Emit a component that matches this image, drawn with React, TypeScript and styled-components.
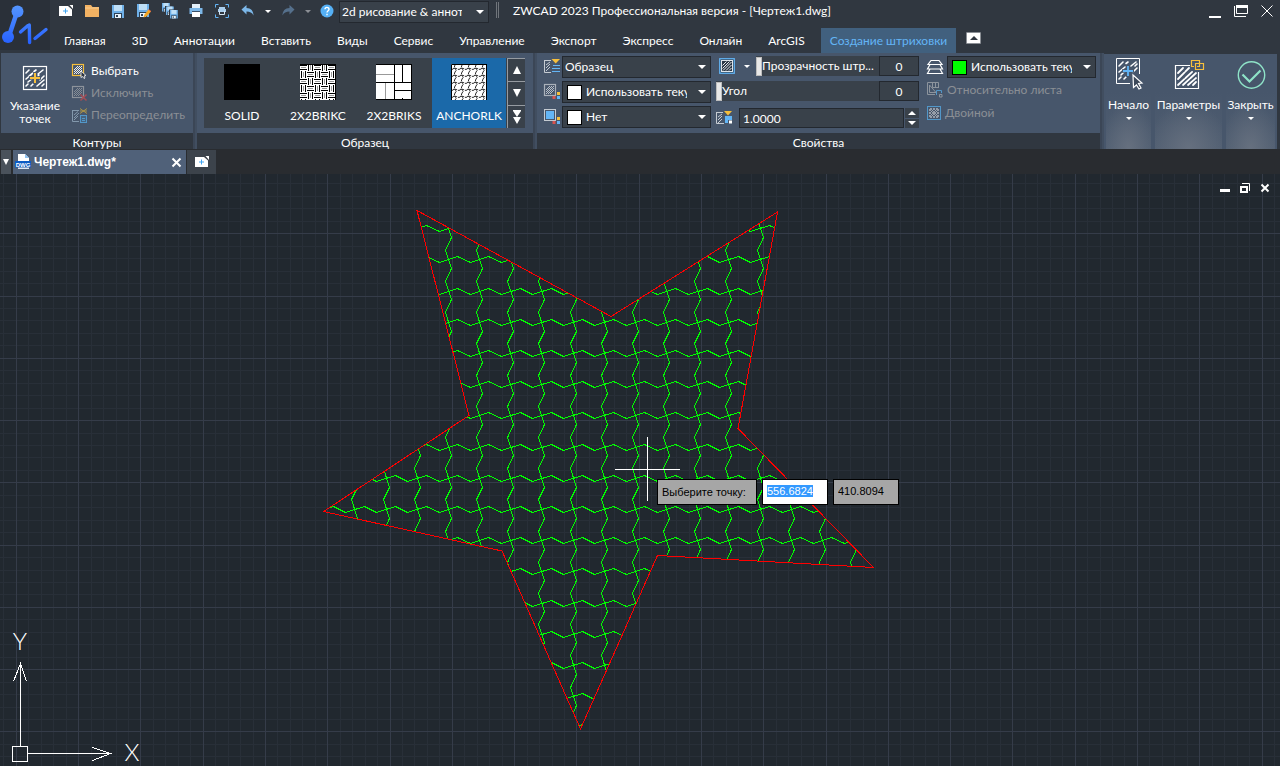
import React, { useEffect, useRef } from "react";
import styled, { createGlobalStyle, css } from "styled-components";

const c = {
  bar: "#303740",
  logo: "#2a3039",
  panel: "#47566b",
  divider: "#3b4656",
  field: "#39414a",
  edge: "#23282f",
  text: "#ffffff",
  muted: "#8b8f95",
  blue: "#63b5f6",
  yellow: "#f6bf3c",
  strip: "#292c30",
  canvas: "#21282f",
  minor: "#282f38",
  major: "#353c49",
};

const Global = createGlobalStyle`
  *, *::before, *::after { box-sizing: border-box; }
  body { margin: 0; background: ${c.canvas}; }
  body, button, input, select { font-family: Lato, "Open Sans", sans-serif; font-size: 12px; line-height: 16px; color: ${c.text}; }
  button, input, select { margin: 0; padding: 0; border: 0; background: none; border-radius: 0; outline: none; }
  svg { display: block; flex: none; overflow: visible; }
`;

/* ---------- window frame ---------- */

const Window = styled.div`
  display: flex;
  flex-direction: column;
  min-height: 100vh;
`;
const Header = styled.header`
  display: flex;
  background: ${c.bar};
  height: 53px;
`;
const Logo = styled.div`
  width: 50px;
  height: 50px;
  background: ${c.logo};
`;
const HeaderRows = styled.div`
  flex: 1;
  min-width: 0;
`;
const TitleBar = styled.div`
  display: flex;
  height: 24px;
  padding-left: 3px;
`;
const QuickButton = styled.button<{ $w?: number }>`
  display: grid;
  place-items: center;
  width: ${(p) => p.$w ?? 26}px;
  height: 22px;
`;
const Workspace = styled.div`
  margin-top: 1px;
`;
const Grip = styled.span`
  width: 3px;
  height: 16px;
  margin: 2px 14px 0 7px;
  border: solid #70757b;
  border-width: 0 1px;
`;
const Title = styled.h1`
  flex: 1;
  margin: 0;
  font-size: 12px;
  font-weight: 400;
  line-height: 22px;
  white-space: nowrap;
`;
const MenuTabs = styled.nav`
  display: flex;
  align-items: center;
  height: 29px;
  padding: 4px 0 0 1px;
`;
const MenuTab = styled.button<{ $active?: boolean }>`
  height: 25px;
  padding: 0 13px;
  white-space: nowrap;
  ${(p) =>
    p.$active &&
    css`
      margin-left: 3px;
      padding: 0 9px;
      background: #41607e;
      color: ${c.blue};
    `}
`;
const Collapse = styled.button`
  display: grid;
  place-items: center;
  width: 15px;
  height: 12px;
  margin: 0 0 6px 10px;
  background: #fff;
  border: 1px solid #8b8f95;
  border-radius: 1px;
`;

/* ---------- ribbon ---------- */

const Ribbon = styled.section`
  display: flex;
  height: 96px;
  padding: 0 3px 0 1px;
  background: ${c.bar};
`;
const Group = styled.div<{ $grow?: boolean }>`
  display: flex;
  flex-direction: column;
  flex: ${(p) => (p.$grow ? "1 0 auto" : "none")};
`;
const GroupBody = styled.div`
  display: flex;
  height: 80px;
  background: ${c.panel};
`;
const GroupTitle = styled.div`
  height: 16px;
  line-height: 20px;
  text-align: center;
`;
const Divider = styled.div`
  width: 4px;
  background: #414e60;
  border-left: 2px solid ${c.divider};
`;
const PickPoints = styled.button`
  display: flex;
  flex-direction: column;
  align-items: center;
  gap: 8px;
  width: 68px;
  padding-top: 13px;
  line-height: 13px;
`;
const ToolList = styled.div`
  display: flex;
  flex-direction: column;
  padding: 7px 8px 0 3px;
`;
const Tool = styled.button`
  display: flex;
  align-items: center;
  gap: 4px;
  height: 22px;
  white-space: nowrap;
  &:disabled {
    color: ${c.muted};
  }
`;
const Gallery = styled.div`
  display: flex;
  height: 70px;
  margin: 5px 8px 0 7px;
  background: ${c.field};
`;
const Swatch = styled.button<{ $active?: boolean }>`
  display: flex;
  flex-direction: column;
  align-items: center;
  gap: 8px;
  width: 76px;
  padding-top: 6px;
  background: ${(p) => (p.$active ? "#1b69a9" : "transparent")};
  &:nth-child(4) {
    width: 74px;
  }
`;
const Scroller = styled.div`
  display: flex;
  flex-direction: column;
  width: 18px;
  margin-left: 1px;
  border-left: 1px solid #969ba1;
`;
const ScrollButton = styled.button`
  display: grid;
  place-items: center;
  flex: 1;
  border-top: 1px solid #969ba1;
`;
const Column = styled.div<{ $gap: number; $left: number; $w: number }>`
  display: flex;
  flex-direction: column;
  gap: ${(p) => p.$gap}px;
  width: ${(p) => p.$w}px;
  padding: 3px 0 0 ${(p) => p.$left}px;
`;
const Row = styled.div<{ $h: number }>`
  display: flex;
  align-items: center;
  height: ${(p) => p.$h}px;
`;
const RowIcon = styled.span<{ $w: number }>`
  display: flex;
  flex: none;
  width: ${(p) => p.$w}px;
`;
const Combo = styled.label<{ $w: number; $chip: boolean }>`
  display: flex;
  align-items: center;
  width: ${(p) => p.$w}px;
  height: 22px;
  padding: 0 4px 0 ${(p) => (p.$chip ? 4 : 2)}px;
  background: ${c.field};
  border: 1px solid ${c.edge};
  select {
    flex: 1;
    min-width: 0;
    appearance: none;
    overflow: hidden;
    text-overflow: clip;
  }
  option {
    color: #000;
  }
  svg {
    margin-left: ${(p) => (p.$chip ? 11 : 14)}px;
  }
`;
const Chip = styled.span<{ $color: string }>`
  width: 15px;
  height: 15px;
  margin-right: 4px;
  background: ${(p) => p.$color};
  border: 1px solid #000;
`;
const SliderBox = styled.div`
  display: grid;
  flex: 1;
  min-width: 0;
  grid-template-columns: minmax(0, 1fr);
  height: 20px;
  background: ${c.field};
  label,
  input {
    grid-area: 1 / 1;
  }
  label {
    padding-left: 6px;
    line-height: 20px;
    pointer-events: none;
    white-space: nowrap;
    z-index: 1;
  }
  input {
    appearance: none;
    width: 100%;
    height: 20px;
  }
  input::-webkit-slider-thumb {
    appearance: none;
    width: 6px;
    height: 19px;
    background: #e8e8e8;
    border: 1px solid #bdbdbd;
  }
`;
const NumberBox = styled.input`
  flex: none;
  width: 40px;
  height: 20px;
  background: ${c.field};
  border: 1px solid ${c.edge};
  text-align: center;
`;
const ScaleBox = styled.input`
  flex: 1;
  min-width: 0;
  height: 20px;
  padding-left: 3px;
  background: ${c.field};
  border: 1px solid ${c.edge};
`;
const Spinner = styled.div`
  display: grid;
  grid-template-rows: 1fr 1fr;
  gap: 1px;
  width: 14px;
  height: 20px;
  margin-left: 1px;
  button {
    display: grid;
    place-items: center;
    background: ${c.field};
  }
`;
const Actions = styled.div`
  display: flex;
  gap: 4px;
  margin-top: 1px;
  padding: 0 2px;
  background: ${c.panel};
`;
const Action = styled.button<{ $w: number }>`
  display: flex;
  flex-direction: column;
  align-items: center;
  width: ${(p) => p.$w}px;
  padding-top: 4px;
  background: radial-gradient(ellipse 60% 50% at 50% 100%, #66707f, transparent), linear-gradient(${c.panel} 40%, #505e71);
  span {
    margin: 7px 0 4px;
    line-height: 16px;
  }
`;

/* ---------- document tabs ---------- */

const DocTabs = styled.div`
  display: flex;
  gap: 1px;
  height: 25px;
  padding: 1px 0 0 1px;
  background: ${c.strip};
`;
const DocList = styled.button`
  display: grid;
  place-items: center;
  width: 10px;
  margin-right: 1px;
  background: #4a525b;
`;
const DocTab = styled.div`
  display: flex;
  align-items: center;
  width: 173px;
  padding: 0 5px 0 2px;
  background: #506179;
`;
const DocName = styled.button`
  flex: 1;
  padding-left: 3px;
  font-family: "Liberation Sans", Arial, sans-serif;
  font-weight: 700;
  text-align: left;
`;
const NewDoc = styled.button`
  display: grid;
  place-items: center;
  width: 29px;
  background: #3c434b;
`;

/* ---------- drawing area ---------- */

const Canvas = styled.main`
  position: relative;
  flex: 1;
  min-height: 592px;
  overflow: hidden;
  background: ${c.canvas};
`;
const Sheet = styled.svg`
  position: absolute;
  inset: 0;
  width: 100%;
  height: 100%;
`;
const Ucs = styled.svg`
  position: absolute;
  left: 0;
  bottom: 0;
`;
const ViewButtons = styled.div`
  position: absolute;
  top: 4px;
  right: 5px;
  display: flex;
  button {
    display: grid;
    place-items: center;
    width: 20px;
    height: 20px;
  }
`;
const Prompt = styled.form`
  position: absolute;
  left: 657px;
  top: 305px;
  display: flex;
  gap: 5px;
`;
const PromptText = styled.label`
  width: 100px;
  height: 26px;
  padding-left: 4px;
  background: #a6a6a6;
  border: 1px solid #000;
  color: #000;
  font: 11px/25px "Liberation Sans", Arial, sans-serif;
`;
const Coordinate = styled.input<{ $active?: boolean }>`
  width: 66px;
  height: 26px;
  padding: 0 0 3px 4px;
  background: ${(p) => (p.$active ? "#fff" : "#a6a6a6")};
  border: 1px solid #000;
  color: #000;
  font: 11px/14px "Liberation Sans", Arial, sans-serif;
  &::selection {
    background: #3399ff;
    color: #fff;
  }
`;

/* ---------- icons ---------- */

const Caret = ({ w = 8, up = false, color = "#fff" }: { w?: number; up?: boolean; color?: string }) => (
  <svg width={w} height={w / 2} viewBox="0 0 8 4">
    <path d={up ? "M0 4L4 0L8 4Z" : "M0 0H8L4 4Z"} fill={color} />
  </svg>
);

const LogoIcon = () => (
  <svg width="50" height="50" viewBox="0 0 50 50">
    <defs>
      <linearGradient id="logo" x1="0" y1="0" x2="0" y2="50" gradientUnits="userSpaceOnUse">
        <stop offset="0" stopColor="#5b9dff" />
        <stop offset="1" stopColor="#1f58ff" />
      </linearGradient>
    </defs>
    <g fill="url(#logo)">
      <circle cx="17.5" cy="11.500" r="6" />
      <circle cx="8" cy="37" r="6" />
    </g>
    <g fill="none" stroke="url(#logo)" strokeLinecap="round">
      <path d="M17 12L9 36" strokeWidth="4.500" />
      <path d="M20.500 32L28 25.500M29.300 25L29.600 42.500M35 38.500L46 29.500" strokeWidth="3.400" />
    </g>
  </svg>
);

const NewFileIcon = () => (
  <svg width="14" height="12" viewBox="0 0 14 12">
    <path d="M0 1H9L13 4.500V11H0Z" fill="#fff" />
    <path d="M10.500 0H14V4Z" fill="#fff" />
    <path d="M4 6H9M6.500 3.500V8.500" stroke="#3fa4f0" />
  </svg>
);
const FolderIcon = () => (
  <svg width="14" height="12" viewBox="0 0 14 12">
    <path d="M0 0H6L7.500 2H14V12H0Z" fill="#f2b263" />
    <path d="M0 3H14" stroke="#f8cd92" />
  </svg>
);
const Disk = ({ x = 0, y = 0, s = 1 }: { x?: number; y?: number; s?: number }) => (
  <g transform={`translate(${x} ${y}) scale(${s})`}>
    <path d="M0 0H12V13H0Z" fill="#6fb0e8" />
    <path d="M2 0H10V6H2Z" fill="#bfdff7" />
    <path d="M2 8H10V13H2Z" fill="#2c4258" />
    <path d="M3 9H9V13H3Z" fill="#e9f4fc" />
    <path d="M4 10H6V12H4Z" fill="#2c4258" />
  </g>
);
const SaveIcon = () => (
  <svg width="12" height="13" viewBox="0 0 12 13">
    <Disk />
  </svg>
);
const SaveAsIcon = () => (
  <svg width="14" height="14" viewBox="0 0 14 14">
    <Disk />
    <path d="M6.500 13.500L7.500 10.500L11.500 5.500L14 7.500L9.500 12.500Z" fill="#f5a623" />
    <path d="M11.500 5.500L14 7.500" stroke="#f06b4b" />
  </svg>
);
const SaveAllIcon = () => (
  <svg width="16" height="16" viewBox="0 0 16 16">
    <Disk s={0.65} />
    <path d="M3 3H12V12H3Z" fill={c.bar} />
    <Disk x={4} y={3.5} s={0.65} />
    <path d="M7 6.500H16V16H7Z" fill={c.bar} />
    <Disk x={8} y={7} s={0.65} />
  </svg>
);
const PrintIcon = () => (
  <svg width="14" height="14" viewBox="0 0 14 14">
    <path d="M3 0H11V4H3Z" fill="#e4f0fa" />
    <path d="M0.500 4H13.500V10H0.500Z" fill="#7cb7e8" />
    <path d="M3 7H11V13H3Z" fill="#fff" />
    <path d="M3 7.500H11" stroke="#3b5068" />
  </svg>
);
const PreviewIcon = () => (
  <svg width="14" height="14" viewBox="0 0 14 14">
    <path d="M0.500 3.500V0.500H3.500M10.500 0.500H13.500V3.500M13.500 10.500V13.500H10.500M3.500 13.500H0.500V10.500" fill="none" stroke={c.blue} />
    <path d="M4 3H10V5H4ZM3 5H11V8H3Z" fill="#a9cdec" />
    <path d="M4.500 7V10.500H9.500V7" fill="none" stroke="#d5e6f4" />
  </svg>
);
const UndoIcon = ({ flip = false, color = "#7cb7e8" }: { flip?: boolean; color?: string }) => (
  <svg width="14" height="12" viewBox="0 0 14 12">
    <path transform={flip ? "translate(14 0) scale(-1 1)" : undefined} d="M0.500 4.500L5.500 0V3C10 3 12.500 6 12.500 10.500C11 7.500 9 6.500 5.500 6.500V9.500Z" fill={color} />
  </svg>
);
const HelpIcon = () => (
  <svg width="14" height="14" viewBox="0 0 14 14">
    <circle cx="7" cy="7" r="6.500" fill="#55b0f5" />
    <path d="M5 5.300C5 2.800 9 2.800 9 5.200C9 6.700 7 6.700 7 8.600" fill="none" stroke="#fff" strokeWidth="1.400" />
    <path d="M6.300 9.800H7.700V11.200H6.300Z" fill="#fff" />
  </svg>
);

const MinimizeIcon = () => (
  <svg width="12" height="14" viewBox="0 0 12 14">
    <path d="M0 12H12V14H0Z" fill="#fff" />
  </svg>
);
const RestoreIcon = () => (
  <svg width="14" height="12" viewBox="0 0 14 12">
    <path d="M2.500 1V8.500H13.500V1M0.500 1V11.500H12" fill="none" stroke="#fff" />
    <path d="M2 0H14V3H2Z" fill="#fff" />
  </svg>
);
const CloseIcon = ({ size = 12, stroke = 1 }: { size?: number; stroke?: number }) => (
  <svg width={size} height={size} viewBox={`0 0 ${size} ${size}`}>
    <path d={`M0.500 0.500L${size - 0.5} ${size - 0.5}M${size - 0.5} 0.500L0.500 ${size - 0.5}`} stroke="#fff" strokeWidth={stroke} />
  </svg>
);

const PickPointsIcon = () => (
  <svg width="24" height="25" viewBox="0 0 24 25">
    <rect x="0.500" y="0.500" width="23" height="23" fill="none" stroke="#fff" strokeWidth="1.200" />
    <path
      d="M3 7L6 4M3 13L10 7M11 5.500L13 4M3 20L5 18M8 9L9 8M15 8L20 4M16 9L15 10M5 16L10 12M17 14L21 10M8 20L10 18M14 20L21 14M19 20L21 18M6 10L9 7.500"
      stroke="#fff"
      strokeWidth="1.600"
      strokeLinecap="round"
    />
    <path d="M6 12H18M12 6V18" stroke={c.panel} strokeWidth="3.600" />
    <path d="M7 12H17M12 7V17" stroke={c.yellow} strokeWidth="2" />
  </svg>
);
const MiniHatch = ({ frame, line }: { frame: string; line: string }) => (
  <g fill="none">
    <rect x="0.500" y="0.500" width="11" height="11" stroke={frame} strokeWidth="1.200" />
    <path d="M2 6L6 2M2 10L10 2M6 10L10 6M2 8L8 2M4 10L10 4" stroke={line} strokeWidth="0.900" />
  </g>
);
const SelectIcon = () => (
  <svg width="15" height="15" viewBox="0 0 15 15">
    <MiniHatch frame={c.yellow} line="#fff" />
    <path d="M9 7L14 11.500L12 12L13 14L12 14.500L10.500 12.500L9 13.500Z" fill="#2c3440" stroke="#fff" strokeWidth="0.800" />
  </svg>
);
const ExcludeIcon = () => (
  <svg width="15" height="15" viewBox="0 0 15 15">
    <MiniHatch frame="#8d939b" line="#8d939b" />
    <path d="M8.500 8.500L14.500 14.500M14.500 8.500L8.500 14.500" stroke="#a54c55" strokeWidth="1.500" />
  </svg>
);
const RedefineIcon = () => (
  <svg width="15" height="15" viewBox="0 0 15 15">
    <path d="M0.500 2V13.500H7M0.500 2.500H7M2 7L6 3.500M2 10L7 5M2 12L6 8" fill="none" stroke="#8398ac" />
    <path d="M8 0.500L15 5.500M15 0.500L8 5.500M8 3H15" stroke="#b39a45" strokeWidth="0.900" />
    <rect x="8.500" y="7.500" width="6" height="7" fill="#47637e" stroke="#5297c9" />
    <path d="M10 10.500H13M10 12.500H13" stroke="#5297c9" />
  </svg>
);
const PatternListIcon = () => (
  <svg width="16" height="16" viewBox="0 0 16 16">
    <path d="M0.500 1V13.500H7M0.500 1.500H7M2 6L6 3M2 9L6 5M2 12L6 8" fill="none" stroke="#c5cbd2" />
    <path d="M7.500 0H16L11.700 4.500Z" fill={c.yellow} />
    <path d="M9 6.500H16M8 9.500H16M8 12.500H16" stroke={c.blue} strokeWidth="1.200" />
  </svg>
);
const HatchColorIcon = () => (
  <svg width="16" height="16" viewBox="0 0 16 16">
    <MiniHatch frame="#aab1ba" line="#c5cbd2" />
    <path d="M13 8H16V11H13Z" fill={c.yellow} />
    <path d="M8.500 12H11.500V15H8.500Z" fill="#d9534f" />
    <path d="M13 12H16V15H13Z" fill={c.blue} />
  </svg>
);
const BackgroundIcon = () => (
  <svg width="16" height="16" viewBox="0 0 16 16">
    <rect x="0.500" y="0.500" width="11" height="11" fill="none" stroke="#c5cbd2" />
    <rect x="2" y="2" width="8" height="8" fill="#63b5f6" />
    <path d="M13 8H16V11H13Z" fill={c.yellow} />
    <path d="M8.500 12H11.500V15H8.500Z" fill="#d9534f" />
    <path d="M13 12H16V15H13Z" fill={c.blue} />
  </svg>
);
const TransparencyIcon = () => (
  <svg width="16" height="16" viewBox="0 0 16 16">
    <rect x="0.750" y="0.750" width="14.500" height="14.500" fill="#2b3745" stroke={c.blue} strokeWidth="1.300" />
    <rect x="2.500" y="2.500" width="11" height="11" fill="none" stroke="#dfe4e9" />
    <path d="M3.500 7.500L7.500 3.500M3.500 10.500L10.500 3.500M4 12.500L12.500 4M7 12.500L12.500 7M10 12.500L12.500 10" stroke="#fff" strokeWidth="0.900" />
  </svg>
);
const ScaleIcon = () => (
  <svg width="16" height="14" viewBox="0 0 16 14">
    <path d="M0.500 1V12.500H8M0.500 1.500H7M2 6L6 3M2 9L6 5M2 12L6 8" fill="none" stroke="#c5cbd2" />
    <path d="M8 0H16L12 4.500Z" fill={c.yellow} />
    <path d="M9 5H16V9H12V12H9Z" fill={c.blue} />
    <path d="M13 9.500H16V12.500H13Z" fill="#fff" />
  </svg>
);
const LayersIcon = () => (
  <svg width="16" height="14" viewBox="0 0 16 14">
    <path d="M4 0.500H12L15 4.500H1ZM3 4.500L0.500 9H15.500L13 4.500M3 9L0.500 13.500H15.500L13 9" fill="none" stroke="#fff" strokeWidth="1.200" />
  </svg>
);
const PaperIcon = () => (
  <svg width="16" height="16" viewBox="0 0 16 16" fill="none">
    <path d="M11.500 6V0.500H0.500V12.500H8M5.500 0.500V5.500H11.500M8.500 0.500V5.500M2.500 3V10.500H9Z" stroke="#8d949d" />
    <path d="M9.500 13V8.500H14.500V11" stroke="#5297c9" />
    <path d="M12.500 12.500H15V15H12.500Z" stroke="#8d949d" />
  </svg>
);
const DoubleIcon = () => (
  <svg width="14" height="14" viewBox="0 0 14 14" fill="none">
    <rect x="0.500" y="0.500" width="13" height="13" stroke="#5297c9" />
    <path d="M2 5L5 2M2 8L8 2M2 11L11 2M3 12L12 3M6 12L12 6M9 12L12 9M9 2L12 5M6 2L12 8M3 2L12 11M2 3L11 12M2 6L8 12M2 9L5 12" stroke="#a9afb6" strokeWidth="0.800" />
  </svg>
);
const StartIcon = () => (
  <svg width="25" height="32" viewBox="0 0 25 32">
    <path d="M14 25.500H0.500V0.500H23.500V16" fill="none" stroke="#fff" />
    <path
      d="M3 8L7 4M3 14L9 9M10 5.500L12 4M15 8L20 4M3 21L5 19M5 17L9 13M8 21L10 19M17 14L21 10M19 8L21 6"
      stroke="#fff"
      strokeWidth="1.600"
      strokeLinecap="round"
    />
    <path d="M6 13H18M12 7V19" stroke={c.panel} strokeWidth="3.600" />
    <path d="M7 13H17M12 8V18" stroke={c.blue} strokeWidth="1.800" />
    <path d="M17 17L26 25L22.500 25.500L25 30L23 31L20.500 27L17.500 29.500Z" fill="#3c4859" stroke="#fff" strokeWidth="1.200" />
  </svg>
);
const OptionsIcon = () => (
  <svg width="27" height="32" viewBox="0 0 27 32">
    <path d="M15 7.500H0.500V30.500H23.500V14" fill="none" stroke="#fff" strokeWidth="1.200" />
    <path d="M3 15L8 10M3 21L14 10M3 27L18 13M8 27L21 15M13 27L21 20M18 27L21 24" stroke="#fff" strokeWidth="1.800" strokeDasharray="9 1.300" strokeLinecap="round" />
    <path d="M19 8.500H16.500V2.500H24.500V8.500H22M20.500 8.500V5.500H28.500V11.500H20.500V8.500" fill="none" stroke={c.yellow} strokeWidth="1.200" />
  </svg>
);
const AcceptIcon = () => (
  <svg width="30" height="32" viewBox="0 0 30 32" fill="none" stroke="#8fe3c8">
    <circle cx="15.500" cy="17" r="13.200" strokeWidth="1.400" />
    <path d="M6.500 16.500L13.500 23.500L24.500 12.500" strokeWidth="2.200" />
  </svg>
);
const DwgIcon = () => (
  <svg width="16" height="16" viewBox="0 0 16 16">
    <path d="M3 0H10L14 4V8H3Z" fill="#fff" />
    <path d="M10 0V4H14Z" fill="#8dc2f2" />
    <path d="M0 7H16V13.500H0Z" fill="#0b5bc4" />
    <path d="M3 13.500H14V15H3Z" fill="#dfe9f5" />
    <text x="8" y="12.500" textAnchor="middle" fontFamily="Liberation Sans, sans-serif" fontWeight="700" fontSize="6" fill="#fff">
      DWG
    </text>
  </svg>
);

/* ---------- hatch samples ---------- */

const SolidSample = () => (
  <svg width="36" height="36">
    <rect width="36" height="36" fill="#000" />
  </svg>
);
const BrickSmallSample = () => (
  <svg width="36" height="36" shapeRendering="crispEdges">
    <defs>
      <pattern id="brikc" width="14" height="14" patternUnits="userSpaceOnUse">
        <path d="M1 3.500H6M8 10.500H13M3.500 8V13M10.500 1V6" stroke="#999" />
        <path d="M0 1.500H7M0 5.500H7M8.500 0V7M12.500 0V7M7 8.500H14M7 12.500H14M1.500 7V14M5.500 7V14" stroke="#000" />
      </pattern>
    </defs>
    <rect width="36" height="36" fill="#fff" />
    <rect width="36" height="36" fill="url(#brikc)" />
    <path d="M0 0.500H36M35.500 0V36" stroke="#000" />
  </svg>
);
const BrickSample = () => (
  <svg width="36" height="36" shapeRendering="crispEdges" fill="none">
    <rect width="36" height="36" fill="#fff" />
    <path d="M0 10.500H18M9.500 19V36" stroke="#999" />
    <path d="M18.500 0V36M26.500 0V18M0 18.500H36M18 26.500H36M26.500 34V36M0 0.500H36M35.500 0V36M0 35.500H36" stroke="#000" />
  </svg>
);
const AnchorSample = () => (
  <svg width="36" height="36">
    <defs>
      <pattern id="anchorlk" x="1" y="1" width="7" height="7" patternUnits="userSpaceOnUse">
        <path d="M0 4.500L2.500 3L7 4.500M3 0L2 3L4.500 5L3 7" fill="none" stroke="#111" strokeWidth="0.900" strokeDasharray="2.500 0.800" />
      </pattern>
    </defs>
    <rect width="36" height="36" fill="#fff" />
    <rect width="36" height="36" fill="url(#anchorlk)" />
    <path d="M0.500 36V0.500H36M35.500 0V36" fill="none" stroke="#000" />
  </svg>
);

/* ---------- drawing geometry ---------- */

const range = (n: number, from = 0) => Array.from({ length: n }, (_, i) => i + from);
const px = (v: number) => Math.floor(v) + 0.5;

const MAJOR = 62.28;
const gridPath = (keep: (i: number) => boolean) =>
  range(230, -5)
    .filter(keep)
    .map((i) => {
      const d = (i * MAJOR) / 5;
      return `M${px(16.4 + d)} 0V2200M0 ${px(59.75 + d)}H3000`;
    })
    .join("");
const MINOR_GRID = gridPath((i) => i % 5 !== 0);
const MAJOR_GRID = gridPath((i) => i % 5 === 0);

const STAR = "M417 36.500L611 142.500L777.500 38L738 254.500L873.500 393.500L657.500 381.500L580.500 555L502 377L323.500 337.500L469 241.500Z";

const STEP = 31.2;
const ROWS = range(17)
  .map((r) => {
    const y = px(51.6 + r * STEP);
    return "M" + range(20, -5).map((k) => `${px(457.8 + k * 31.17)} ${y}L${px(470.3 + k * 31.17)} ${y + 6}`).join("L");
  })
  .join("");
const COLUMNS = range(19, -5)
  .map((k) => {
    const x = px(451.4 + k * 31.17);
    return "M" + range(18, -1).map((r) => `${x} ${px(63.4 + r * STEP)}L${x - 6} ${px(76.2 + r * STEP)}`).join("L");
  })
  .join("");

const Drawing = () => (
  <Sheet fill="none" shapeRendering="crispEdges">
    <defs>
      <clipPath id="star">
        <path d={STAR} />
      </clipPath>
    </defs>
    <path d={MINOR_GRID} stroke={c.minor} />
    <path d={MAJOR_GRID} stroke={c.major} />
    <path d={ROWS + COLUMNS} stroke="#00ff00" clipPath="url(#star)" />
    <path d={STAR} stroke="#ff0000" />
    <path d="M647.500 263V327M615 295.500H680" stroke="#fff" />
  </Sheet>
);

const UcsIcon = () => (
  <Ucs width="150" height="150" fill="none" stroke="#fff" shapeRendering="crispEdges">
    <path d="M12.500 130.500H27.500V145.500H12.500ZM20.500 130V47M13.500 65.500L20.500 47.500L26.500 65.500M28 137.500H111M92.500 131.500L110.500 137.500L92.500 144.500" />
    <g fill="#fff" stroke="none" fontFamily="Lato, sans-serif" fontWeight="300" fontSize="24" textAnchor="middle">
      <text x="20" y="34">Y</text>
      <text x="132" y="145">X</text>
    </g>
  </Ucs>
);

/* ---------- composed controls ---------- */

const ComboBox = ({ name, width, options, chip }: { name: string; width: number; options: string[]; chip?: string }) => (
  <Combo $w={width} $chip={Boolean(chip)}>
    {chip && <Chip $color={chip} />}
    <select aria-label={name}>
      {options.map((o) => (
        <option key={o}>{o}</option>
      ))}
    </select>
    <Caret />
  </Combo>
);

const Slider = ({ id, label }: { id: string; label: string }) => (
  <SliderBox>
    <input id={id} type="range" min={0} max={90} defaultValue={0} />
    <label htmlFor={id}>{label}</label>
  </SliderBox>
);

const MENU = ["Главная", "3D", "Аннотации", "Вставить", "Виды", "Сервис", "Управление", "Экспорт", "Экспресс", "Онлайн", "ArcGIS"];

const QUICK = [
  ["Создать", NewFileIcon],
  ["Открыть", FolderIcon],
  ["Сохранить", SaveIcon],
  ["Сохранить как", SaveAsIcon],
  ["Сохранить все", SaveAllIcon],
  ["Печать", PrintIcon],
  ["Просмотр", PreviewIcon],
] as const;

const SAMPLES = [
  ["SOLID", SolidSample],
  ["2X2BRIKC", BrickSmallSample],
  ["2X2BRIKS", BrickSample],
  ["ANCHORLK", AnchorSample],
] as const;

export default function App() {
  const xField = useRef<HTMLInputElement>(null);
  useEffect(() => {
    xField.current?.focus();
    xField.current?.select();
  }, []);

  return (
    <Window>
      <Global />
      <Header>
        <Logo>
          <LogoIcon />
        </Logo>
        <HeaderRows>
          <TitleBar>
            {QUICK.map(([name, Icon]) => (
              <QuickButton key={name} aria-label={name}>
                <Icon />
              </QuickButton>
            ))}
            <QuickButton aria-label="Отменить">
              <UndoIcon />
            </QuickButton>
            <QuickButton $w={14} aria-label="Список отмены">
              <Caret w={6} />
            </QuickButton>
            <QuickButton aria-label="Вернуть">
              <UndoIcon flip color="#55708c" />
            </QuickButton>
            <QuickButton $w={14} aria-label="Список возврата">
              <Caret w={6} color="#8b8f95" />
            </QuickButton>
            <QuickButton $w={24} aria-label="Справка">
              <HelpIcon />
            </QuickButton>
            <Workspace>
              <ComboBox name="Рабочее пространство" width={150} options={["2d рисование & аннотации"]} />
            </Workspace>
            <Grip />
            <Title>ZWCAD 2023 Профессиональная версия - [Чертеж1.dwg]</Title>
            <QuickButton aria-label="Свернуть">
              <MinimizeIcon />
            </QuickButton>
            <QuickButton aria-label="Восстановить">
              <RestoreIcon />
            </QuickButton>
            <QuickButton aria-label="Выход">
              <CloseIcon />
            </QuickButton>
          </TitleBar>
          <MenuTabs>
            {MENU.map((m) => (
              <MenuTab key={m}>{m}</MenuTab>
            ))}
            <MenuTab $active>Создание штриховки</MenuTab>
            <Collapse aria-label="Свернуть ленту">
              <Caret up w={8} color="#303740" />
            </Collapse>
          </MenuTabs>
        </HeaderRows>
      </Header>

      <Ribbon>
        <Group>
          <GroupBody>
            <PickPoints>
              <PickPointsIcon />
              <span>
                Указание
                <br />
                точек
              </span>
            </PickPoints>
            <ToolList>
              <Tool>
                <SelectIcon />
                Выбрать
              </Tool>
              <Tool disabled>
                <ExcludeIcon />
                Исключить
              </Tool>
              <Tool disabled>
                <RedefineIcon />
                Переопределить
              </Tool>
            </ToolList>
          </GroupBody>
          <GroupTitle>Контуры</GroupTitle>
        </Group>
        <Divider />
        <Group>
          <GroupBody>
            <Gallery>
              {SAMPLES.map(([name, Sample]) => (
                <Swatch key={name} $active={name === "ANCHORLK"}>
                  <Sample />
                  {name}
                </Swatch>
              ))}
              <Scroller>
                <ScrollButton aria-label="Вверх">
                  <svg width="8" height="8">
                    <path d="M4 0L8 8H0Z" fill="#fff" />
                  </svg>
                </ScrollButton>
                <ScrollButton aria-label="Вниз">
                  <svg width="8" height="8">
                    <path d="M0 0H8L4 8Z" fill="#fff" />
                  </svg>
                </ScrollButton>
                <ScrollButton aria-label="Все образцы">
                  <svg width="8" height="14">
                    <path d="M0 0H8V1H0ZM0 1H8L4 7ZM0 7H8L4 14Z" fill="#fff" />
                  </svg>
                </ScrollButton>
              </Scroller>
            </Gallery>
          </GroupBody>
          <GroupTitle>Образец</GroupTitle>
        </Group>
        <Divider />
        <Group $grow>
          <GroupBody>
            <Column $gap={3} $left={7} $w={174}>
              <Row $h={22}>
                <RowIcon $w={18}>
                  <PatternListIcon />
                </RowIcon>
                <ComboBox name="Тип штриховки" width={149} options={["Образец"]} />
              </Row>
              <Row $h={22}>
                <RowIcon $w={18}>
                  <HatchColorIcon />
                </RowIcon>
                <ComboBox name="Цвет штриховки" width={149} chip="#fff" options={["Использовать текущий"]} />
              </Row>
              <Row $h={22}>
                <RowIcon $w={18}>
                  <BackgroundIcon />
                </RowIcon>
                <ComboBox name="Цвет фона" width={149} chip="#fff" options={["Нет"]} />
              </Row>
            </Column>
            <Column $gap={5} $left={5} $w={208}>
              <Row $h={20}>
                <RowIcon $w={3} />
                <RowIcon $w={25}>
                  <TransparencyIcon />
                </RowIcon>
                <RowIcon $w={12}>
                  <Caret w={6} />
                </RowIcon>
                <Slider id="opacity" label="Прозрачность штр..." />
                <NumberBox aria-label="Прозрачность" defaultValue="0" />
              </Row>
              <Row $h={20}>
                <Slider id="angle" label="Угол" />
                <NumberBox aria-label="Угол" defaultValue="0" />
              </Row>
              <Row $h={24}>
                <RowIcon $w={23}>
                  <ScaleIcon />
                </RowIcon>
                <ScaleBox aria-label="Масштаб" defaultValue="1.0000" />
                <Spinner>
                  <button aria-label="Увеличить">
                    <Caret up />
                  </button>
                  <button aria-label="Уменьшить">
                    <Caret />
                  </button>
                </Spinner>
              </Row>
            </Column>
            <Column $gap={1} $left={8} $w={177}>
              <Row $h={22}>
                <RowIcon $w={20}>
                  <LayersIcon />
                </RowIcon>
                <ComboBox name="Слой" width={149} chip="#00ff00" options={["Использовать текущий"]} />
              </Row>
              <Tool disabled>
                <PaperIcon />
                Относительно листа
              </Tool>
              <Tool disabled>
                <DoubleIcon />
                Двойной
              </Tool>
            </Column>
          </GroupBody>
          <GroupTitle>Свойства</GroupTitle>
        </Group>
        <Divider />
        <Actions>
          <Action $w={45}>
            <StartIcon />
            <span>Начало</span>
            <Caret w={6} />
          </Action>
          <Action $w={67}>
            <OptionsIcon />
            <span>Параметры</span>
            <Caret w={6} />
          </Action>
          <Action $w={49}>
            <AcceptIcon />
            <span>Закрыть</span>
            <Caret w={6} />
          </Action>
        </Actions>
      </Ribbon>

      <DocTabs>
        <DocList aria-label="Список чертежей">
          <svg width="6" height="6">
            <path d="M0 0H6L3 6Z" fill="#fff" />
          </svg>
        </DocList>
        <DocTab>
          <DwgIcon />
          <DocName>Чертеж1.dwg*</DocName>
          <button aria-label="Закрыть чертеж">
            <CloseIcon size={9} stroke={2} />
          </button>
        </DocTab>
        <NewDoc aria-label="Новый чертеж">
          <NewFileIcon />
        </NewDoc>
      </DocTabs>

      <Canvas>
        <Drawing />
        <UcsIcon />
        <ViewButtons>
          <button aria-label="Свернуть окно">
            <svg width="10" height="10">
              <path d="M0 6H10V9H0Z" fill="#fff" />
            </svg>
          </button>
          <button aria-label="Восстановить окно">
            <svg width="10" height="10" fill="none" stroke="#fff">
              <path d="M1 4H7V9H1Z" strokeWidth="2" />
              <path d="M2 0.500H9.500V8" />
            </svg>
          </button>
          <button aria-label="Закрыть окно">
            <CloseIcon size={8} stroke={2} />
          </button>
        </ViewButtons>
        <Prompt>
          <PromptText htmlFor="point-x">Выберите точку:</PromptText>
          <Coordinate id="point-x" ref={xField} $active defaultValue="556.6824" />
          <Coordinate aria-label="Y" defaultValue="410.8094" />
        </Prompt>
      </Canvas>
    </Window>
  );
}
